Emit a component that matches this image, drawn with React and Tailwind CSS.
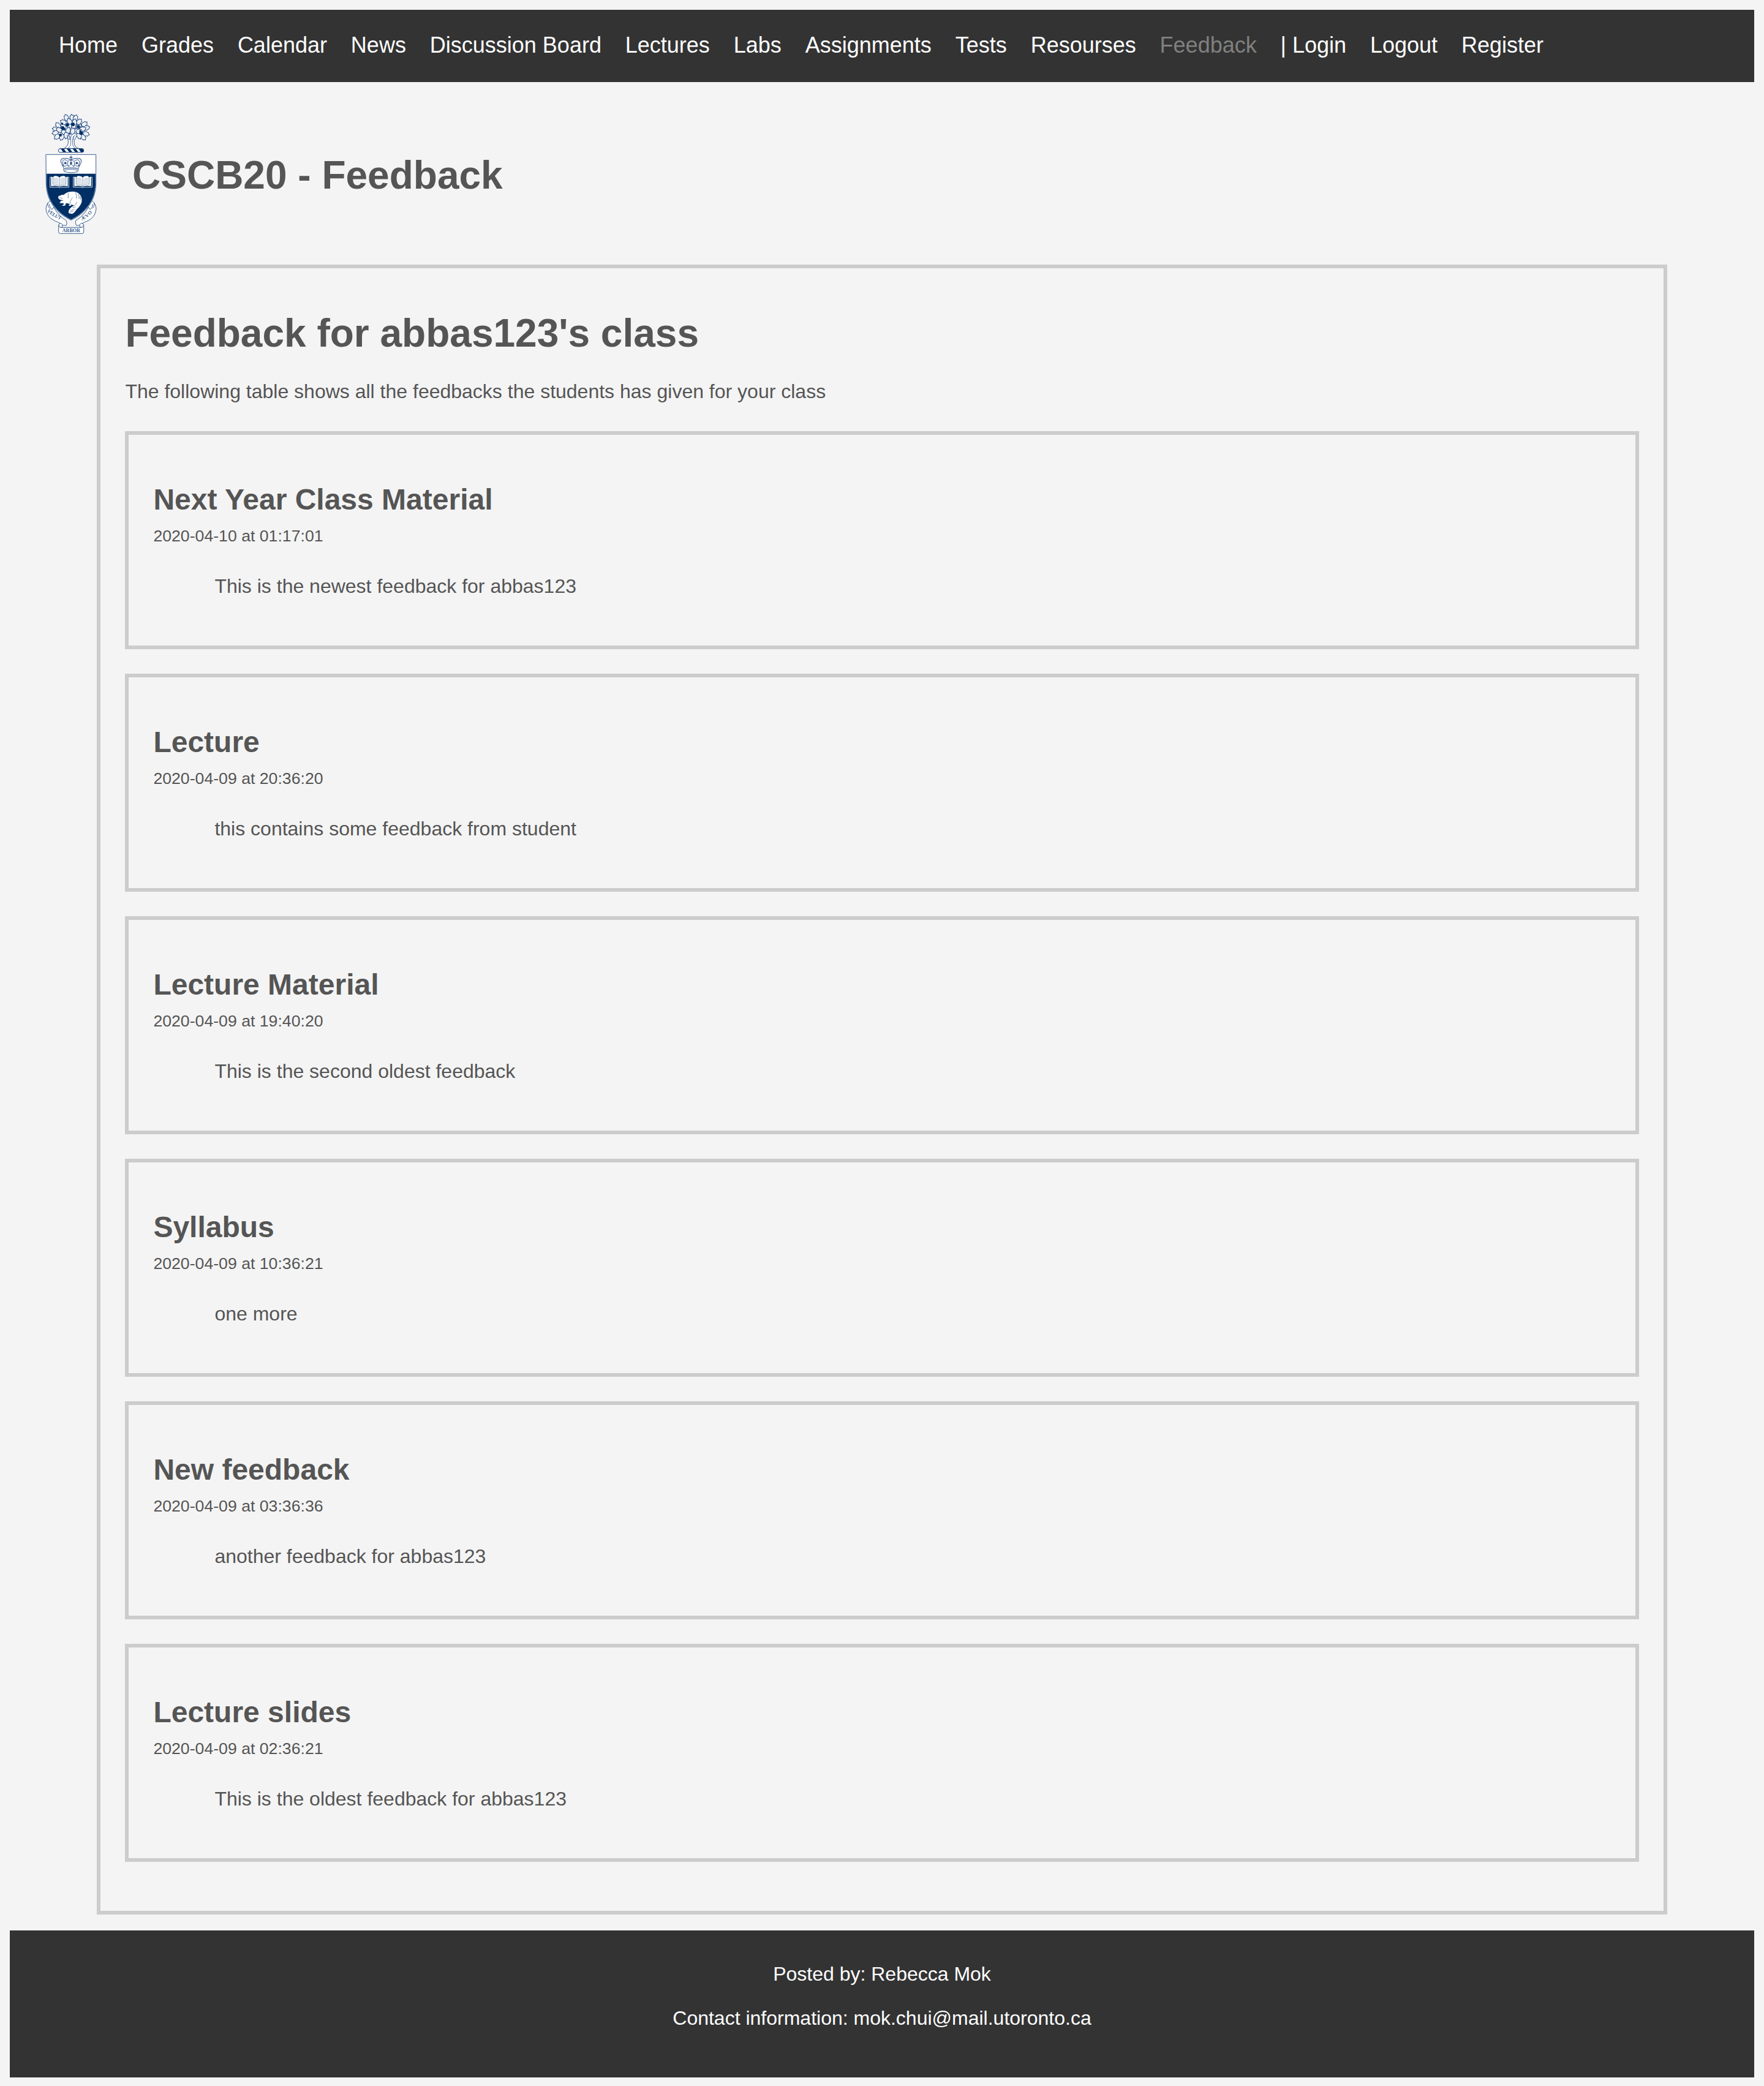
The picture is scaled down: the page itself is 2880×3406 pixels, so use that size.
const NAV = [
  'Home', 'Grades', 'Calendar', 'News', 'Discussion Board', 'Lectures', 'Labs',
  'Assignments', 'Tests', 'Resourses', 'Feedback', '| Login', 'Logout', 'Register',
];

const FEEDBACK = [
  { title: 'Next Year Class Material', date: '2020-04-10 at 01:17:01', text: 'This is the newest feedback for abbas123' },
  { title: 'Lecture', date: '2020-04-09 at 20:36:20', text: 'this contains some feedback from student' },
  { title: 'Lecture Material', date: '2020-04-09 at 19:40:20', text: 'This is the second oldest feedback' },
  { title: 'Syllabus', date: '2020-04-09 at 10:36:21', text: 'one more' },
  { title: 'New feedback', date: '2020-04-09 at 03:36:36', text: 'another feedback for abbas123' },
  { title: 'Lecture slides', date: '2020-04-09 at 02:36:21', text: 'This is the oldest feedback for abbas123' },
];

// Oak leaves of the crest: x, y, rotation in degrees
const LEAVES = [
  [190, 104, -5], [212, 104, 10], [160, 108, -40], [236, 108, 45],
  [175, 66, -20], [203, 66, -12], [220, 68, 18], [238, 86, 40], [190, 84, -30], [215, 88, 10],
  [134, 104, -35], [160, 88, -60], [264, 98, 50], [274, 116, 75],
  [122, 122, -80], [121, 141, -100], [140, 126, -60], [272, 146, 105], [256, 122, 70],
  [129, 160, -130], [152, 162, -160], [164, 138, -60], [258, 163, 140],
  [238, 156, 160], [226, 130, 60], [184, 128, 20], [206, 134, 190], [174, 154, 190], [239, 134, 90],
];

const ACORNS = [[157, 117, 9], [180, 102, 8], [207, 99, 9], [234, 111, 8], [247, 142, 9], [146, 152, 7], [155, 96, 5], [192, 146, 4], [166, 122, 5], [243, 132, 5]];

function Book({ x }) {
  return (
    <g transform={`translate(${x} 350)`}>
      <path d="M4 8H0V57H38Q46 62 54 57H92V8H88" fill="#002f65" stroke="#fff" strokeWidth="2.5" />
      <path d="M5 6Q12 4 14 10Q18 0 27 2Q40 2 46 10Q52 2 65 2Q74 0 78 10Q80 4 87 6V52Q58 46 46 55Q34 46 5 52Z" fill="#fff" />
      <path d="M46 10V55M14 10V43Q34 38 46 52Q58 38 78 43V10" fill="none" stroke="#537199" strokeWidth="2" />
      <path d="M18 14q12-5 22 4M18 21q12-5 22 4M18 28q12-5 22 4M18 35q12-5 22 4M52 18q12-9 22-4M52 25q12-9 22-4M52 32q12-9 22-4M52 39q12-9 22-4" fill="none" stroke="#7f96b4" strokeWidth="2" />
    </g>
  );
}

function Crest() {
  return (
    <svg className="block h-[220px] w-[130px] shrink-0" viewBox="0 0 390 660" fill="none" strokeLinejoin="round" strokeLinecap="round">
      <defs>
        <path id="leaf" d="M0 17L-5 13L-10 12L-9 6L-12 1L-8-4L-9-10L-4-11L0-17L4-11L9-10L8-4L12 1L9 6L10 12L5 13Z" />
        <path id="velut" d="M80 524Q104 552 156 570" />
        <path id="aevo" d="M250 570Q290 552 312 517" />
      </defs>

      {/* tree */}
      <path d="M172 140L184 178Q188 204 164 217H234Q208 206 214 178L232 142" fill="#fff" stroke="#37598a" strokeWidth="3" />
      <path d="M192 150Q200 180 196 200Q192 210 184 215M212 148Q202 180 207 202Q210 211 218 215" stroke="#37598a" strokeWidth="2.5" />
      <ellipse cx="198" cy="116" rx="66" ry="42" fill="#fff" />
      {LEAVES.map(([x, y, r], i) => (
        <g key={i} transform={`translate(${x} ${y}) rotate(${r})`}>
          <use href="#leaf" fill="#fff" stroke="#2b5085" strokeWidth="3" />
          <path d="M0 14V-6" stroke="#8299b8" strokeWidth="1.2" />
        </g>
      ))}
      {ACORNS.map(([x, y, r], i) => (
        <circle key={i} cx={x} cy={y} r={r} fill="#002f65" />
      ))}
      <path d="M180 151Q178 166 187 174M190 152V174M199 152Q198 164 194 174M218 150Q208 160 208 176" stroke="#37598a" strokeWidth="2.5" />

      {/* torse */}
      <rect x="136" y="218" width="124" height="18" rx="8" fill="#fff" stroke="#1d447a" strokeWidth="3" />
      <path d="M147 218H163L175 236H160ZM176 218H192L205 236H190ZM205 218H221L234 236H219ZM234 218H252Q260 220 260 228T252 236H247Z" fill="#002f65" />

      {/* ribbons */}
      <g fill="#fff" stroke="#3d5f90" strokeWidth="3">
        <path d="M98 472Q76 486 75 513Q78 552 116 571Q150 584 158 594H174Q180 584 175 571Q122 540 98 472Z" />
        <path d="M298 472Q320 486 321 513Q318 552 282 571Q248 584 240 594H224Q218 584 221 571Q274 540 298 472Z" />
        <path d="M92 490Q92 508 105 516L116 500M84 484Q82 500 92 510" />
        <path d="M304 490Q304 508 291 516L280 500M312 484Q314 500 304 510" />
        <path d="M137 592Q137 584 148 584Q158 586 156 598Q154 606 146 604H252Q242 606 240 598Q238 586 248 584Q260 584 260 592V626Q260 634 252 634H145Q137 634 137 626Z" />
        <path d="M146 604Q138 602 137 592M251 604Q259 602 260 592" />
      </g>

      {/* shield */}
      <path d="M76 247H320V385C320 476 268 536 198 568C128 536 76 476 76 385Z" fill="#fff" stroke="#3d6093" strokeWidth="3" />
      <path d="M79 342H317V385C317 474 266 532 198 565C130 532 79 474 79 385Z" fill="#002f65" stroke="#002f65" strokeWidth="2" />

      {/* crown */}
      <g stroke="#37598a" strokeWidth="3">
        <path d="M164 311Q148 290 148 278Q150 264 166 266Q182 264 197 274Q214 264 230 266Q246 264 248 278Q248 290 232 311" fill="#fff" strokeWidth="5" strokeDasharray="1 6" />
        <path d="M164 303Q152 284 160 275Q168 268 182 280M232 303Q244 284 236 275Q228 268 214 280" />
        <path d="M184 302Q177 290 184 280Q190 274 198 274Q206 274 212 280Q219 290 212 302M198 276V302" />
        <path d="M198 254V270M192 261H204" strokeWidth="4" />
        <path d="M156 298L164 318H232L240 298L229 306L220 298L210 306L198 294L187 306L177 298L168 306Z" fill="#fff" />
        <path d="M162 318Q198 308 234 318L230 331Q198 340 166 331Z" fill="#fff" />
        <path d="M168 324Q198 315 228 324" strokeDasharray="5 3" />
        <path d="M170 312H226" strokeWidth="2" />
      </g>
      <g fill="#37598a">
        <circle cx="170" cy="289" r="6" />
        <circle cx="198" cy="289" r="6" />
        <circle cx="226" cy="289" r="6" />
      </g>

      <Book x={95} />
      <Book x={209} />

      {/* beaver */}
      <path d="M135 456Q136 448 147 448Q153 442 162 445Q174 431 196 429Q224 426 240 442Q254 458 250 480Q244 500 225 516Q214 534 203 538L188 535Q182 526 192 512Q202 500 216 496Q208 496 200 492L196 498H186L192 490Q180 484 172 486Q172 498 164 498H152L162 492L160 484Q150 488 140 482L148 480L146 474Q152 472 162 474Q152 468 142 468Q135 464 135 456Z" fill="#fff" />
      <path d="M184 438V462M220 434Q228 450 224 462M234 442Q240 452 236 464M244 454V466" stroke="#5f7ba1" strokeWidth="3" strokeDasharray="5 3" />
      <path d="M206 458Q192 470 194 488M216 496Q224 490 226 480M196 522L214 514M194 530L208 524M206 506L220 504M142 459H150L156 464" stroke="#3d5f90" strokeWidth="2" />

      <g fill="#3d5f90" fontFamily="'Liberation Serif', serif" fontWeight="700">
        <text fontSize="24"><textPath href="#velut" textLength="80">VELUT</textPath></text>
        <text fontSize="24"><textPath href="#aevo" textLength="66">ÆVO</textPath></text>
        <text x="155" y="628" fontSize="26" textLength="88" lengthAdjust="spacingAndGlyphs">ARBOR</text>
      </g>
    </svg>
  );
}

export default function App() {
  return (
    <div className="h-[3406px] w-[2880px] bg-[#f4f4f4] px-4 pt-4 text-[32px] leading-9 text-[#555555] [font-family:'Liberation_Sans',Arial,sans-serif]">
      <nav className="flex h-[118px] gap-[38.9px] whitespace-pre bg-[#333333] pl-20 pt-[38px] text-4xl leading-10 text-white">
        {NAV.map((item) => (
          <a key={item} className={item === 'Feedback' ? 'text-[#808080]' : ''}>{item}</a>
        ))}
      </nav>

      <header className="flex h-[298px] items-start pl-[34px] pt-9">
        <Crest />
        <h1 className="ml-9 mt-[79px] text-[64px] font-bold leading-[74px]">CSCB20 - Feedback</h1>
      </header>

      <main className="mx-[142.4px] h-[2694px] border-[6px] border-[#cccccc] px-10 pt-[69px]">
        <h1 className="text-[64px] font-bold leading-[74px]">Feedback for abbas123's class</h1>
        <p className="mt-10">The following table shows all the feedbacks the students has given for your class</p>
        <div className="mt-[47px] flex flex-col gap-10">
          {FEEDBACK.map((f) => (
            <section key={f.title} className="h-[356px] border-[6px] border-[#cccccc] px-10 pt-[78px]">
              <h2 className="text-5xl font-bold leading-[56px]">{f.title}</h2>
              <p className="mt-4 text-[26.667px] leading-[30px]">{f.date}</p>
              <p className="ml-[100px] mt-[49px]">{f.text}</p>
            </section>
          ))}
        </div>
      </main>

      <footer className="mt-[26px] h-60 bg-[#333333] pt-[53px] text-center text-white">
        <p>Posted by: Rebecca Mok</p>
        <p className="mt-9">Contact information: mok.chui@mail.utoronto.ca</p>
      </footer>
    </div>
  );
}
